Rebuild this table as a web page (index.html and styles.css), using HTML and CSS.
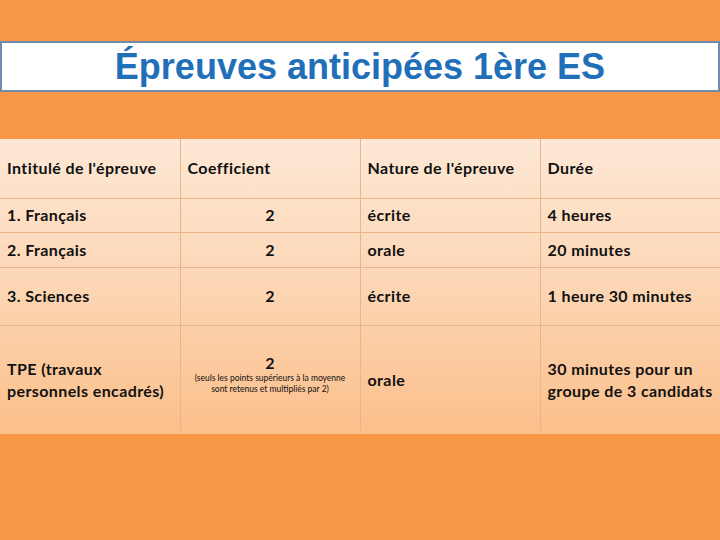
FILE: index.html
```html
<!DOCTYPE html>
<html lang="fr">
<head>
<meta charset="utf-8">
<title>Épreuves anticipées 1ère ES</title>
<link rel="stylesheet" href="styles.css">
</head>
<body>
<div class="slide">
  <div class="title-box"><h1 class="title">Épreuves anticipées 1ère ES</h1></div>
  <table class="grid">
    <tr class="r-head">
      <td>Intitulé de l'épreuve</td>
      <td>Coefficient</td>
      <td>Nature de l'épreuve</td>
      <td>Durée</td>
    </tr>
    <tr class="r1">
      <td>1. Français</td>
      <td class="num">2</td>
      <td>écrite</td>
      <td>4 heures</td>
    </tr>
    <tr class="r2">
      <td>2. Français</td>
      <td class="num">2</td>
      <td>orale</td>
      <td>20 minutes</td>
    </tr>
    <tr class="r3">
      <td>3. Sciences</td>
      <td class="num">2</td>
      <td>écrite</td>
      <td>1 heure 30 minutes</td>
    </tr>
    <tr class="r4">
      <td class="two">TPE (travaux<br>personnels encadrés)</td>
      <td class="num tpe"><span class="big">2</span><span class="note">(seuls les points supérieurs à la moyenne<br>sont retenus et multipliés par 2)</span></td>
      <td>orale</td>
      <td class="two">30 minutes pour un<br>groupe de 3 candidats</td>
    </tr>
  </table>
</div>
</body>
</html>
```
FILE: styles.css
```css
html, body {
  margin: 0;
  padding: 0;
}
body {
  background: #f79646;
  width: 720px;
  height: 540px;
  overflow: hidden;
}
.slide {
  padding-top: 41px;
}
.title-box {
  box-sizing: border-box;
  height: 51px;
  background: #ffffff;
  border: 2px solid #6f8aab;
  display: flex;
  align-items: center;
  justify-content: center;
}
.title {
  margin: 0;
  font-family: "Liberation Sans", Arial, sans-serif;
  font-weight: bold;
  font-size: 36px;
  line-height: 1;
  color: #1f70b8;
  position: relative;
  top: 0;
}
.grid {
  margin-top: 47px;
  width: 720px;
  border-collapse: collapse;
  table-layout: fixed;
  background: linear-gradient(to bottom, #fde8d6 0%, #fcd6b4 50%, #fbbf8b 100%);
  font-family: Lato, "Open Sans", sans-serif;
  font-weight: bold;
  font-size: 16px;
  letter-spacing: 0.4px;
  color: #111111;
}
.grid td {
  border: 1px solid #e8b58c;
  padding: 0 7px;
  vertical-align: middle;
  text-align: left;
  line-height: 22px;
}
.grid tr td:first-child { border-left: none; }
.grid tr td:last-child { border-right: none; }
.grid tr.r-head td { border-top: none; }
.grid tr.r4 td { border-bottom: none; }
.r-head { height: 59px; }
.r1 { height: 34px; }
.r2 { height: 35px; }
.r3 { height: 58px; }
.r4 { height: 109px; }
.grid td.num { text-align: center; }
.tpe {
  padding-bottom: 12px !important;
}
.big {
  display: block;
  line-height: 20px;
}
.note {
  display: block;
  font-size: 8.5px;
  letter-spacing: 0;
  line-height: 11px;
  font-weight: normal;
}
```
